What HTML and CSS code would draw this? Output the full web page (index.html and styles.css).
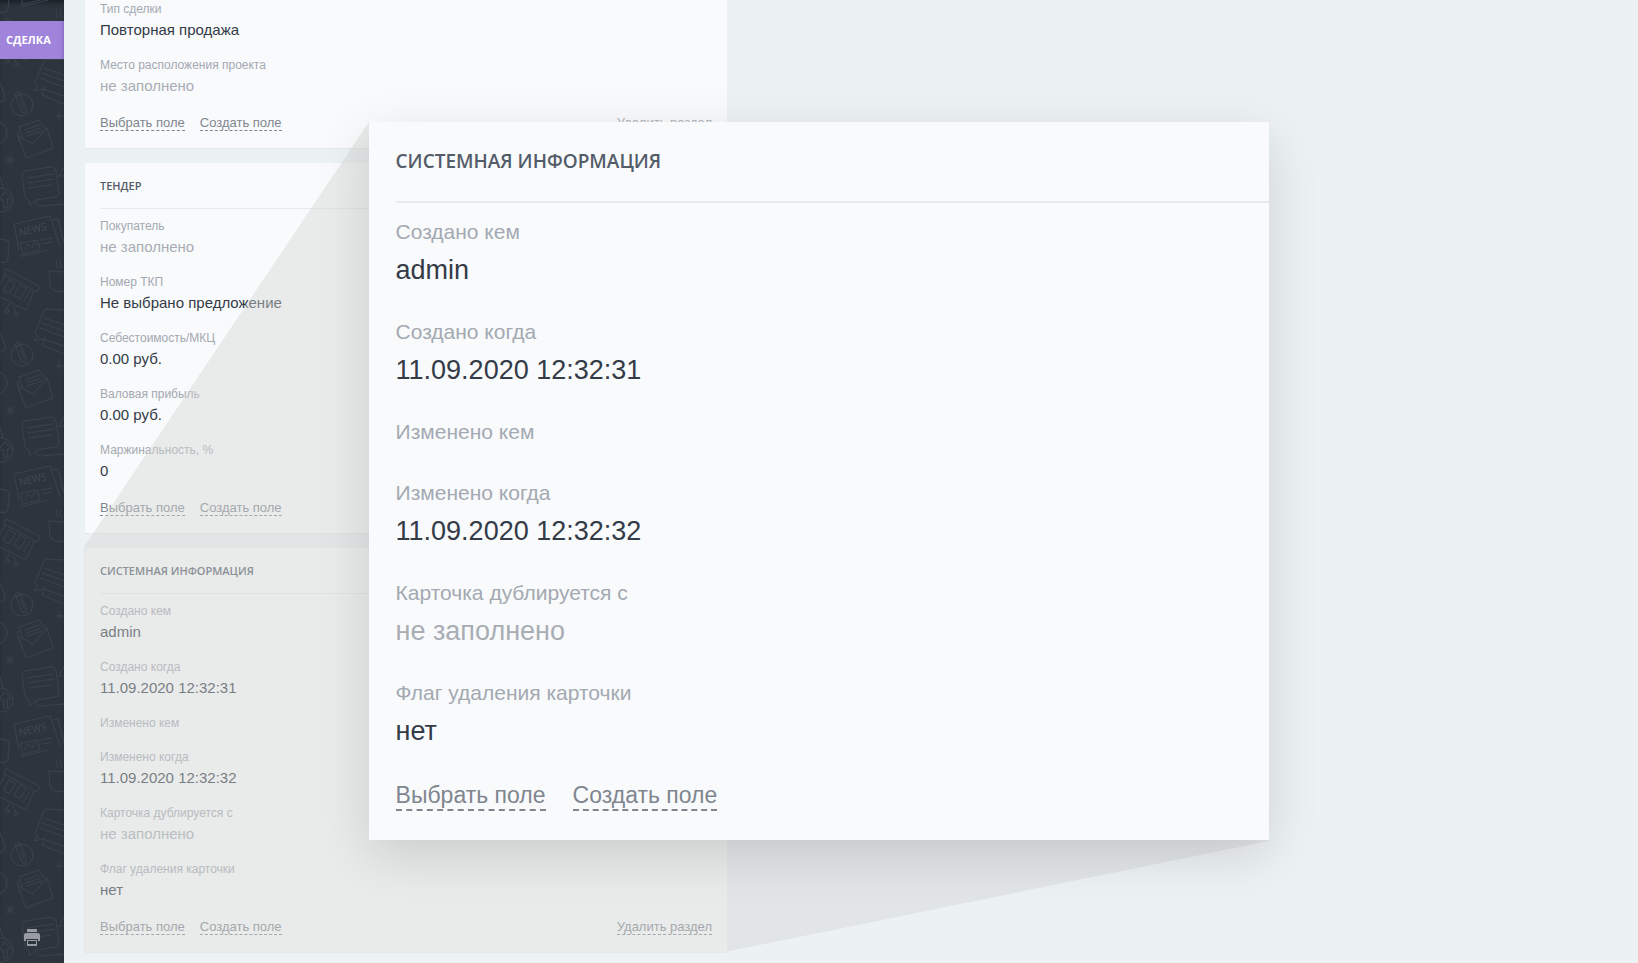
FILE: index.html
```
<!DOCTYPE html>
<html lang="ru">
<head>
    <meta charset="UTF-8">
    <meta name="viewport" content="width=device-width, initial-scale=1.0">
    <title>Сделка</title>
    <link rel="stylesheet" href="styles.css">
</head>
<body>
    <div class="page">
        <aside class="sidebar">
            <svg class="sidebar-pattern" width="64" height="100%" aria-hidden="true">
                <defs>
                    <pattern id="doodles" width="64" height="250" patternUnits="userSpaceOnUse">
                        <g class="doodle-lines">
                            <!-- cup with steam -->
                            <path d="M57 10q-2 3 0 5t0 3M61 10q-2 3 0 5t0 3M49 21l15 1M49 21l1 15q0 5 14 6"/>
                            <!-- mug edge -->
                            <path d="M0 83l5 13q1 5-5 6M0 -11l6 1q4 1 3 6l-1 13q-1 5-8 3M0 239l6 1q4 1 3 6l-1 13q-1 5-8 3"/>
                            <!-- board on a tripod -->
                            <path d="M6 19l-2 5 33 18 3-5zM5 25L-6 46M34 41L26 60L-4 45M9 30l-6 10 6 4 6-10zM20 35l-6 10 6 4 6-10zM30 41l-6 10M9 54l-2 5M13 56l3 6"/>
                            <circle cx="7" cy="61" r="2"/>
                            <circle cx="16" cy="64" r="2"/>
                            <!-- speech bubbles -->
                            <path d="M64 60l-17-1q-3 0-4 4l-8 20 3 3-4 5 9-2 21 7M44 68l20 7M42 73l22 8M40 78l24 9M45 87l-3 8 22 9"/>
                            <path d="M25 171l26-4q4 0 5 4l3 22q0 4-4 4l-19 3-6 6-1-6q-3 0-4-4l-3-20q0-4 3-5zM27 178l26-4M28 183l26-4M29 188l22-3M59 176l5-9M59 176l5 0M36 201q0 6 5 5l23-2"/>
                            <!-- pencil in a circle -->
                            <circle cx="22" cy="105" r="11"/>
                            <path d="M15 95l7 17 4 1 0-5-6-15q-3-3-5 2zM16 97l5-2M20 99l4 9"/>
                            <!-- envelope -->
                            <path d="M18 136l8 22 27-10-6-20M18 136l15 8 14-16M20 143l-3-11 3-1M19 127l20-7 7 10M19 127l4 12M25 130l14-5M26 133l15-5M27 136l15-5"/>
                            <circle cx="-5" cy="133" r="12"/>
                            <!-- stars -->
                            <path d="M59 112v7M56 116h7M10 156v8M6 160h8M7 157l6 6M13 157l-6 6"/>
                            <!-- pointer in a circle -->
                            <circle cx="1" cy="200" r="12"/>
                            <path d="M0 177l3 11M4 192l-5 8 4 0 1 8 4-1-1-8 4-1z"/>
                            <!-- newspaper, split by the tile edge -->
                            <path d="M20 255L14 224L50 216L60 246M53 220l5-1 6 24"/>
                            <path d="M20 5q1 2 4 1L60 -3 M60 -4q4 0 4-4M23 4l17-4-2-10-17 3zM25 0l3-6 4 4 3-6 4 4M42 -6l10-2M42 -3l10-2"/>
                            <path d="M23 254l17-4-2-10-17 3zM25 250l3-6 4 4 3-6 4 4M41 240l11-2M42 244l10-2"/>
                        </g>
                        <text class="doodle-news" x="20" y="236" transform="rotate(-13 20 236)">NEWS</text>
                    </pattern>
                </defs>
                <rect width="64" height="100%" fill="url(#doodles)"/>
            </svg>
            <a class="sidebar-tab" href="#">Сделка</a>
            <button class="print-button" type="button" aria-label="Печать">
                <svg width="16" height="17" viewBox="0 0 16 17" aria-hidden="true">
                    <path d="M3 0h10v3H3zM2 4h12q2 0 2 2v6h-2v-2H2v2H0V6q0-2 2-2zM3 11h10v6H3zM4 12v3h8v-3z" fill="#989ca2" fill-rule="evenodd"/>
                </svg>
            </button>
        </aside>

        <main class="content">
            <div class="cards">
                <section class="card card-scrolled">
                    <dl class="fields">
                        <div class="field"><dt>Тип сделки</dt><dd>Повторная продажа</dd></div>
                        <div class="field"><dt>Место расположения проекта</dt><dd class="empty">не заполнено</dd></div>
                    </dl>
                    <div class="card-links">
                        <a href="#">Выбрать поле</a>
                        <a href="#">Создать поле</a>
                        <a class="link-remove" href="#">Удалить раздел</a>
                    </div>
                </section>

                <section class="card">
                    <h2>Тендер</h2>
                    <dl class="fields">
                        <div class="field"><dt>Покупатель</dt><dd class="empty">не заполнено</dd></div>
                        <div class="field"><dt>Номер ТКП</dt><dd>Не выбрано предложение</dd></div>
                        <div class="field"><dt>Себестоимость/МКЦ</dt><dd>0.00 руб.</dd></div>
                        <div class="field"><dt>Валовая прибыль</dt><dd>0.00 руб.</dd></div>
                        <div class="field"><dt>Маржинальность, %</dt><dd>0</dd></div>
                    </dl>
                    <div class="card-links">
                        <a href="#">Выбрать поле</a>
                        <a href="#">Создать поле</a>
                    </div>
                </section>

                <section class="card">
                    <h2>Системная информация</h2>
                    <dl class="fields">
                        <div class="field"><dt>Создано кем</dt><dd>admin</dd></div>
                        <div class="field"><dt>Создано когда</dt><dd>11.09.2020 12:32:31</dd></div>
                        <div class="field"><dt>Изменено кем</dt></div>
                        <div class="field"><dt>Изменено когда</dt><dd>11.09.2020 12:32:32</dd></div>
                        <div class="field"><dt>Карточка дублируется с</dt><dd class="empty">не заполнено</dd></div>
                        <div class="field"><dt>Флаг удаления карточки</dt><dd>нет</dd></div>
                    </dl>
                    <div class="card-links">
                        <a href="#">Выбрать поле</a>
                        <a href="#">Создать поле</a>
                        <a class="link-remove" href="#">Удалить раздел</a>
                    </div>
                </section>
            </div>
        </main>

        <!-- Луч от карточки к увеличенной копии -->
        <svg class="beam" viewBox="0 0 1638 963" preserveAspectRatio="none" aria-hidden="true">
            <path d="M369 122L84 547V952H725L1269 841V122z"/>
        </svg>

        <section class="card card-zoomed">
            <h2>Системная информация</h2>
            <dl class="fields">
                <div class="field"><dt>Создано кем</dt><dd>admin</dd></div>
                <div class="field"><dt>Создано когда</dt><dd>11.09.2020 12:32:31</dd></div>
                <div class="field"><dt>Изменено кем</dt></div>
                <div class="field"><dt>Изменено когда</dt><dd>11.09.2020 12:32:32</dd></div>
                <div class="field"><dt>Карточка дублируется с</dt><dd class="empty">не заполнено</dd></div>
                <div class="field"><dt>Флаг удаления карточки</dt><dd>нет</dd></div>
            </dl>
            <div class="card-links">
                <a href="#">Выбрать поле</a>
                <a href="#">Создать поле</a>
            </div>
        </section>
    </div>
</body>
</html>
```
FILE: styles.css
```
* {
    box-sizing: border-box;
}

body {
    margin: 0;
    background: #ecf1f4;
    font-family: "Liberation Sans", Arial, sans-serif;
    color: #333b47;
}

.page {
    position: relative;
    display: flex;
    min-height: 100vh;
    overflow: hidden;
}

/* Sidebar */
.sidebar {
    position: relative;
    display: flex;
    flex-direction: column;
    justify-content: space-between;
    width: 64px;
    padding: 21px 0 17px;
    background: #2c353e;
    box-shadow: inset 0 5px 4px -2px #1c2127;
}

.sidebar-pattern {
    position: absolute;
    top: 0;
    left: 0;
}

.doodle-lines {
    fill: none;
    stroke: #39424b;
    stroke-linecap: round;
    stroke-linejoin: round;
}

.doodle-news {
    font: 10px "Open Sans", sans-serif;
    fill: #3f4851;
}

.sidebar-tab {
    position: relative;
    padding: 0 6px;
    background: #a084dc;
    box-shadow: inset -4px 0 4px -3px #8468bc;
    color: #fff;
    font: bold 11px/38px "Open Sans", sans-serif;
    text-transform: uppercase;
    text-decoration: none;
}

.print-button {
    position: relative;
    align-self: center;
    height: 17px;
    padding: 0;
    border: 0;
    background: none;
    cursor: pointer;
}

.print-button svg {
    display: block;
}

/* Cards */
.content {
    flex: 1;
    display: grid;
    grid-template-columns: 642fr 911fr;
    align-items: start;
    padding: 0 0 11px 21px;
}

.cards {
    display: flex;
    flex-direction: column;
    gap: 15px;
}

.card {
    padding: 0 15px 17px;
    background: #f9fafc;
    box-shadow: 0 1px 0 #e3e8eb;
}

.card h2 {
    margin: 0 -15px 9px 0;
    border-bottom: 1px solid #e6eaed;
    font: 600 11px/45px "Open Sans", sans-serif;
    color: #535c69;
    text-transform: uppercase;
}

.fields {
    margin: 0;
}

.field {
    margin-bottom: 16px;
}

.field dt {
    padding-bottom: 2px;
    font-size: 12px;
    line-height: 16px;
    color: #a3a9b1;
}

.field dd {
    margin: 0;
    font-size: 15px;
    line-height: 22px;
}

.field .empty {
    color: #a8adb4;
}

.card-links {
    display: flex;
    gap: 15px;
    padding-top: 3px;
}

.card-links a {
    border-bottom: 1px dashed #80868e;
    font-size: 13px;
    line-height: 14px;
    color: #80868e;
    text-decoration: none;
}

.card-links .link-remove {
    margin-left: auto;
}

.card-scrolled {
    padding-top: 1px;
}

.card-scrolled .link-remove {
    opacity: 0.6;
}

/* Zoomed copy of the card */
.beam {
    position: absolute;
    top: 0;
    left: 0;
    width: 100%;
    height: 963px;
    fill: rgba(212, 213, 212, 0.43);
    pointer-events: none;
}

.card-zoomed {
    position: absolute;
    top: 122px;
    left: 22.5%;
    width: 55%;
    padding: 0 27px 29px;
    box-shadow: 0 15px 48px rgba(0, 0, 0, 0.13);
}

.card-zoomed h2 {
    margin: 0 -27px 15px 0;
    border-bottom-width: 2px;
    font-size: 19px;
    line-height: 79px;
}

.card-zoomed .field {
    margin-bottom: 28px;
}

.card-zoomed dt {
    padding-bottom: 5px;
    font-size: 21px;
    line-height: 28px;
}

.card-zoomed dd {
    font-size: 27px;
    line-height: 39px;
}

.card-zoomed .card-links {
    gap: 27px;
    padding-top: 2px;
}

.card-zoomed .card-links a {
    border-bottom-width: 2px;
    font-size: 23px;
    line-height: 28px;
}
```
